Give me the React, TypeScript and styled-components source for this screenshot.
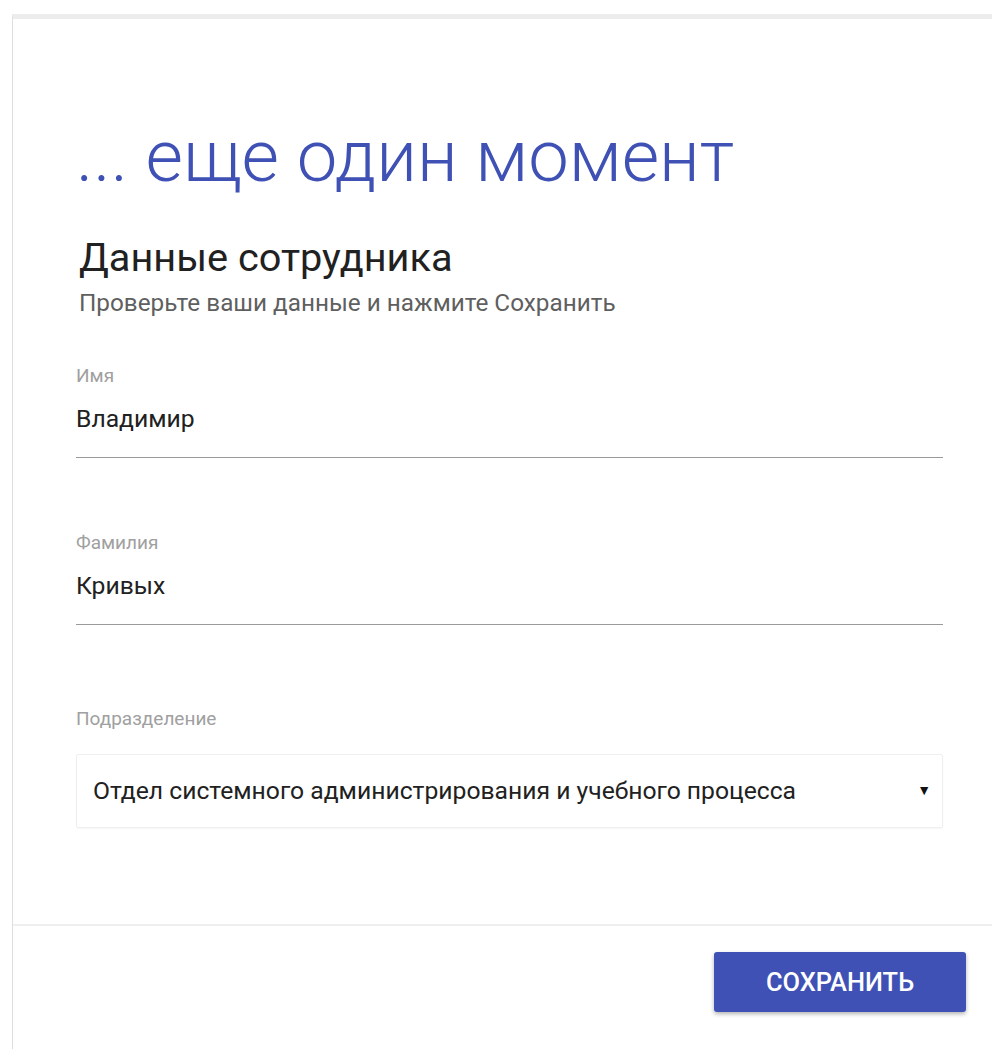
import styled, { createGlobalStyle } from 'styled-components';

const GlobalStyle = createGlobalStyle`
  html, body {
    margin: 0;
    padding: 0;
    background: #ffffff;
  }
  body {
    font-family: Roboto, "Noto Sans", sans-serif;
    color: #212121;
  }
`;

const Page = styled.div`
  padding: 14px 0 0 12px;
  height: 1049px;
  box-sizing: border-box;
  overflow: hidden;
`;

const Card = styled.div`
  background: #ffffff;
  border-top: 5px solid #ececec;
  border-left: 1px solid #dedede;
  min-height: 1100px;
  box-sizing: border-box;
`;

const Body = styled.div`
  padding: 98px 49px 0 63px;
`;

const Title = styled.h1`
  margin: 0;
  font-weight: 300;
  font-size: 72.4px;
  line-height: 80px;
  color: #3f51b5;
`;

const Subheading = styled.h2`
  margin: 39px 0 0 3px;
  font-weight: 400;
  font-size: 39.7px;
  line-height: 44px;
  color: #212121;
`;

const Hint = styled.p`
  margin: 9px 0 0 3px;
  font-size: 24.3px;
  line-height: 28px;
  color: #5f5f5f;
`;

const Form = styled.div`
  display: flex;
  flex-direction: column;
  margin-top: 47px;
  gap: 73px;
`;

const Field = styled.div<{ $extraSpace?: number }>`
  display: flex;
  flex-direction: column;
  margin-top: ${(p) => p.$extraSpace ?? 0}px;
`;

const Label = styled.div`
  font-size: 19px;
  line-height: 24px;
  color: #a0a0a0;
`;

const Value = styled.div`
  font-size: 24.7px;
  line-height: 30px;
  padding: 16px 0 23px;
  border-bottom: 1px solid #9a9a9a;
  color: #212121;
`;

const Select = styled.div`
  margin-top: 23px;
  height: 74px;
  box-sizing: border-box;
  display: flex;
  align-items: center;
  justify-content: space-between;
  padding: 0 11px 2px 16px;
  border: 1px solid #efefef;
  border-radius: 2px;
  box-shadow: 0 1px 2px rgba(0, 0, 0, 0.04);
  font-size: 24.7px;
  color: #212121;
`;

const Caret = styled.span`
  font-size: 14px;
  color: #111;
`;

const Footer = styled.div`
  margin-top: 96px;
  border-top: 2px solid #efefef;
  display: flex;
  justify-content: flex-end;
  padding: 26px 26px 0 0;
`;

const SaveButton = styled.button`
  width: 252px;
  height: 60px;
  border: none;
  border-radius: 3px;
  background: #3f51b5;
  color: #ffffff;
  font-family: Roboto, sans-serif;
  font-weight: 500;
  font-size: 25.4px;
  box-shadow: 0 2px 4px rgba(0, 0, 0, 0.3);
  cursor: pointer;
`;

export default function App() {
  return (
    <Page>
      <GlobalStyle />
      <Card>
        <Body>
          <Title>... еще один момент</Title>
          <Subheading>Данные сотрудника</Subheading>
          <Hint>Проверьте ваши данные и нажмите Сохранить</Hint>
          <Form>
            <Field>
              <Label>Имя</Label>
              <Value>Владимир</Value>
            </Field>
            <Field>
              <Label>Фамилия</Label>
              <Value>Кривых</Value>
            </Field>
            <Field $extraSpace={9}>
              <Label>Подразделение</Label>
              <Select>
                <span>Отдел системного администрирования и учебного процесса</span>
                <Caret>▼</Caret>
              </Select>
            </Field>
          </Form>
        </Body>
        <Footer>
          <SaveButton>СОХРАНИТЬ</SaveButton>
        </Footer>
      </Card>
    </Page>
  );
}
